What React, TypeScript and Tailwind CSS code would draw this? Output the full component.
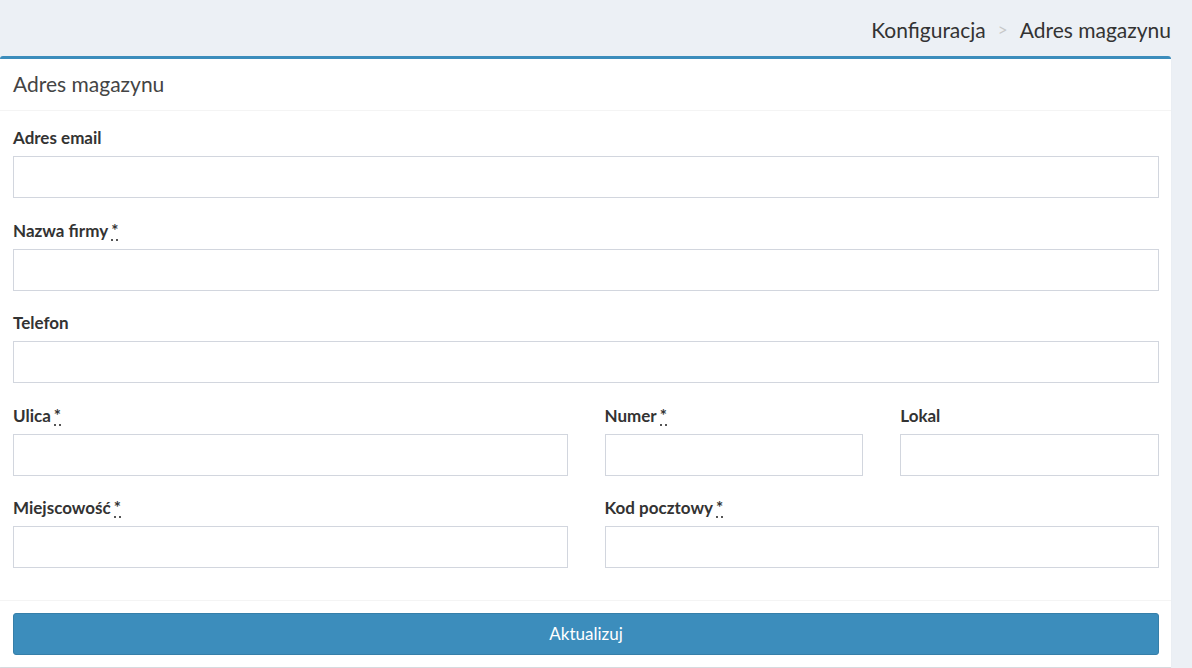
import React from "react";

const Req = () => (
  <abbr title="wymagane" className="ml-[3px] no-underline border-b-2 border-dotted border-[#555] inline-block leading-[14px] h-[17px] align-top mt-[5px]">
    *
  </abbr>
);

function Field({ label, required, className = "" }: { label: string; required?: boolean; className?: string }) {
  return (
    <div className={`mb-[20.5px] ${className}`}>
      <label className="block h-[24px] mb-[6px] text-[17px] font-bold text-[#333] leading-[24px] whitespace-nowrap">
        {label}
        {required && <Req />}
      </label>
      <input
        type="text"
        className="block w-full h-[42px] border border-[#d2d6de] bg-white px-3 outline-none"
      />
    </div>
  );
}

export default function App() {
  return (
    <div className="min-h-screen w-full bg-[#ecf0f5] pr-[21px] text-[#333]" style={{ fontFamily: "Lato, 'Open Sans', sans-serif" }}>
      {/* Breadcrumb */}
      <div className="h-[56px] flex items-center justify-end pt-[3px] text-[21px] text-[#333]">
        <span>Konfiguracja</span>
        <span className="text-[#c8c8c8] text-[17px] mx-[12px]">&gt;</span>
        <span>Adres magazynu</span>
      </div>

      {/* Card */}
      <div className="bg-white border-t-[3px] border-[#3c8dbc] rounded-t-[3px] shadow-[0_1px_1px_rgba(0,0,0,0.1)]">
        <div className="h-[52px] flex items-center px-[13px] pb-[2px] border-b border-[#f4f4f4]">
          <h3 className="text-[21px] text-[#444]">Adres magazynu</h3>
        </div>

        <div className="pl-[13px] pr-[12px] pt-[15px] pb-[11px]">
          <Field label="Adres email" />
          <Field label="Nazwa firmy" required />
          <Field label="Telefon" />
          <div className="grid grid-cols-4 gap-x-[37px]">
            <Field label="Ulica" required className="col-span-2" />
            <Field label="Numer" required />
            <Field label="Lokal" />
            <Field label="Miejscowość" required className="col-span-2" />
            <Field label="Kod pocztowy" required className="col-span-2" />
          </div>
        </div>

        <div className="border-t border-[#f4f4f4] pl-[13px] pr-[12px] pt-[12px] pb-[12px]">
          <button className="w-full h-[42px] rounded-[3px] bg-[#3c8dbc] border border-[#367fa9] text-white text-[17px]">
            Aktualizuj
          </button>
        </div>
      </div>
    </div>
  );
}
